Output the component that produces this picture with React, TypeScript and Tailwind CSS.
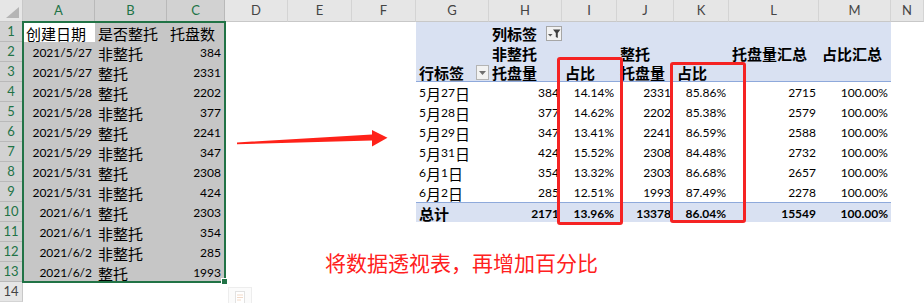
import React from 'react';

type Cell = {
  t?: string;
  right?: boolean;
  bold?: boolean;
  bg?: string;
  line?: string;
  pad?: string;
  extra?: React.ReactNode;
};

const SEL = 'bg-[#c6c6c6]';
const PV = 'bg-[#d9e1f2]';
const LETTERS = ['A', 'B', 'C', 'D', 'E', 'F', 'G', 'H', 'I', 'J', 'K', 'L', 'M', 'N'];

const src = [
  ['2021/5/27', '非整托', '384'],
  ['2021/5/27', '整托', '2331'],
  ['2021/5/28', '整托', '2202'],
  ['2021/5/28', '非整托', '377'],
  ['2021/5/29', '整托', '2241'],
  ['2021/5/29', '非整托', '347'],
  ['2021/5/31', '整托', '2308'],
  ['2021/5/31', '非整托', '424'],
  ['2021/6/1', '整托', '2303'],
  ['2021/6/1', '非整托', '354'],
  ['2021/6/2', '非整托', '285'],
  ['2021/6/2', '整托', '1993'],
];

const pivot = [
  ['5月27日', '384', '14.14%', '2331', '85.86%', '2715', '100.00%'],
  ['5月28日', '377', '14.62%', '2202', '85.38%', '2579', '100.00%'],
  ['5月29日', '347', '13.41%', '2241', '86.59%', '2588', '100.00%'],
  ['5月31日', '424', '15.52%', '2308', '84.48%', '2732', '100.00%'],
  ['6月1日', '354', '13.32%', '2303', '86.68%', '2657', '100.00%'],
  ['6月2日', '285', '12.51%', '1993', '87.49%', '2278', '100.00%'],
];
const total = ['总计', '2171', '13.96%', '13378', '86.04%', '15549', '100.00%'];

// filter button on 列标签
function FilterBtn() {
  return (
    <span className="flex h-[15px] w-[16px] items-center justify-center border border-[#a6a6a6] bg-[#f2f2f2]">
      <svg width="14" height="11" viewBox="0 0 14 11">
        <path d="M1 6 H5.5 L3.25 8.5 Z" fill="#595959" />
        <path d="M6 1.5 H13.5 L10.8 5 V10 L8.8 9 V5 Z" fill="#404040" />
      </svg>
    </span>
  );
}

// dropdown button on 行标签
function DropBtn() {
  return (
    <span className="flex h-[15px] w-[13px] items-center justify-center border border-[#b4b4b4] bg-[#f2f2f2]">
      <svg width="9" height="6" viewBox="0 0 9 6">
        <path d="M1 1 H8 L4.5 5 Z" fill="#6f6f6f" />
      </svg>
    </span>
  );
}

function Txt({ s }: { s: string }) {
  const parts = s.split(/([\x20-\x7e]+)/).filter(Boolean);
  return (
    <>
      {parts.map((p, i) =>
        /^[\x20-\x7e]+$/.test(p) ? (
          <span key={i} className="font-['Lato',sans-serif] text-[12px]">
            {p}
          </span>
        ) : (
          <span key={i}>{p}</span>
        )
      )}
    </>
  );
}

function buildRow(r: number): Cell[] {
  const row: Cell[] = Array.from({ length: 14 }, () => ({}));

  // source table A:C
  if (r === 1) {
    row[0] = { t: '创建日期', bg: 'bg-white' };
    row[1] = { t: '是否整托', bg: SEL };
    row[2] = { t: '托盘数', bg: SEL };
  } else if (r <= 13) {
    const [d, k, n] = src[r - 2];
    row[0] = { t: d, right: true, bg: SEL };
    row[1] = { t: k, bg: SEL };
    row[2] = { t: n, right: true, bg: SEL, pad: 'pr-[4px]' };
  }

  // pivot G:M
  if (r <= 3) {
    for (let c = 6; c <= 12; c++) row[c] = { bg: PV, bold: true };
    if (r === 1) {
      row[7] = { t: '列标签', bg: PV, bold: true, extra: <FilterBtn /> };
    }
    if (r === 2) {
      row[7].t = '非整托';
      row[9].t = '整托';
      row[11].t = '托盘量汇总';
      row[12].t = '占比汇总';
    }
    if (r === 3) {
      for (let c = 6; c <= 12; c++) row[c].line = 'border-b border-[#8ea9db]';
      row[6] = { ...row[6], t: '行标签', extra: <DropBtn /> };
      row[7].t = '托盘量';
      row[8].t = '占比';
      row[9].t = '托盘量';
      row[10].t = '占比';
    }
  } else if (r <= 9) {
    const p = pivot[r - 4];
    p.forEach((v, i) => {
      row[6 + i] = { t: v, right: i > 0, bg: 'bg-white' };
    });
  } else if (r === 10) {
    total.forEach((v, i) => {
      row[6 + i] = { t: v, right: i > 0, bold: true, bg: PV, line: 'border-t border-[#8ea9db]' };
    });
  }
  return row;
}

function GridCell({ c }: { c: Cell }) {
  const align = c.right ? 'justify-end' : 'justify-start';
  const pad = c.pad ?? (c.right ? 'pr-[3px]' : 'pl-[3px]');
  return (
    <div
      className={`flex h-full items-center whitespace-nowrap pt-[2px] font-['Noto_Sans_CJK_SC',sans-serif] text-[15px] leading-none text-black ${
        c.bold ? 'font-bold' : 'font-normal'
      } ${c.bg ?? ''} ${c.line ?? ''} ${c.extra ? 'justify-between pl-[3px]' : `${align} ${pad}`}`}
    >
      {c.t && <Txt s={c.t} />}
      {c.extra}
    </div>
  );
}

export default function App() {
  const rows = Array.from({ length: 14 }, (_, i) => i + 1);

  return (
    <div className="relative h-[303px] w-[924px] overflow-hidden bg-white">
      <div className="grid grid-cols-[23px_72px_72px_58px_63px_64px_64px_73px_73px_55px_57px_55px_90px_72px_33px] grid-rows-[22px_repeat(14,20px)]">
        {/* corner */}
        <div className="relative border-b border-r border-[#c8c8c8] bg-[#e6e6e6]">
          <svg className="absolute bottom-[3px] right-[3px]" width="13" height="11" viewBox="0 0 13 11">
            <path d="M13 0 V11 H0 Z" fill="#b5b5b5" />
          </svg>
        </div>
        {LETTERS.map((l, i) => (
          <div
            key={l}
            className={`flex items-center justify-center border-b border-r font-['Lato',sans-serif] text-[13px] ${
              i < 3
                ? 'border-b-[#217346] border-r-[#b9b9b9] bg-[#d2d2d2] text-[#217346]'
                : 'border-b-[#c8c8c8] border-r-[#d4d4d4] bg-[#e6e6e6] text-[#444]'
            }`}
          >
            {l}
          </div>
        ))}

        {rows.map((r) => (
          <React.Fragment key={r}>
            <div
              className={`flex items-center justify-center border-b border-r font-['Lato',sans-serif] text-[13px] ${
                r <= 13
                  ? 'border-b-[#b9b9b9] border-r-[#217346] bg-[#d2d2d2] text-[#217346]'
                  : 'border-b-[#d4d4d4] border-r-[#c8c8c8] bg-[#e6e6e6] text-[#444]'
              }`}
            >
              {r}
            </div>
            {buildRow(r).map((c, i) => (
              <GridCell key={i} c={c} />
            ))}
          </React.Fragment>
        ))}
      </div>

      {/* selection border + fill handle */}
      <div className="pointer-events-none absolute left-[22px] top-[21px] h-[262px] w-[204px] border-2 border-[#217346]" />
      <div className="absolute left-[221px] top-[278px] h-[7px] w-[7px] border border-white bg-[#217346]" />

      {/* quick analysis */}
      <div className="absolute left-[228px] top-[287px] flex h-[20px] w-[24px] items-start justify-center border border-[#ededed] bg-[#fbfbfb] pt-[3px]">
        <svg width="12" height="14" viewBox="0 0 12 14">
          <rect x="1.5" y="0.5" width="9" height="12" fill="#fff" stroke="#e2e2e2" />
          <path d="M3 4 H9 M3 6.5 H9 M3 9 H7" stroke="#f1d9c8" strokeWidth="1" />
        </svg>
      </div>

      {/* red highlight boxes */}
      <div className="pointer-events-none absolute left-[557px] top-[57px] h-[168px] w-[66px] rounded-[3px] border-[3px] border-[#f52323]" />
      <div className="pointer-events-none absolute left-[670px] top-[62px] h-[161px] w-[76px] rounded-[3px] border-[3px] border-[#f52323]" />

      {/* arrow */}
      <svg className="absolute left-0 top-0" width="924" height="303" viewBox="0 0 924 303">
        <polygon
          points="237,142.5 372,134.5 372,130 387.5,137.7 372,146.5 372,140.5 237,144.3"
          fill="#ff2219"
        />
      </svg>

      {/* annotation */}
      <div className="absolute left-[325px] top-[252px] whitespace-nowrap font-['Noto_Sans_CJK_SC',sans-serif] text-[21px] leading-none text-[#ff2020]">
        将数据透视表，再增加百分比
      </div>
    </div>
  );
}
